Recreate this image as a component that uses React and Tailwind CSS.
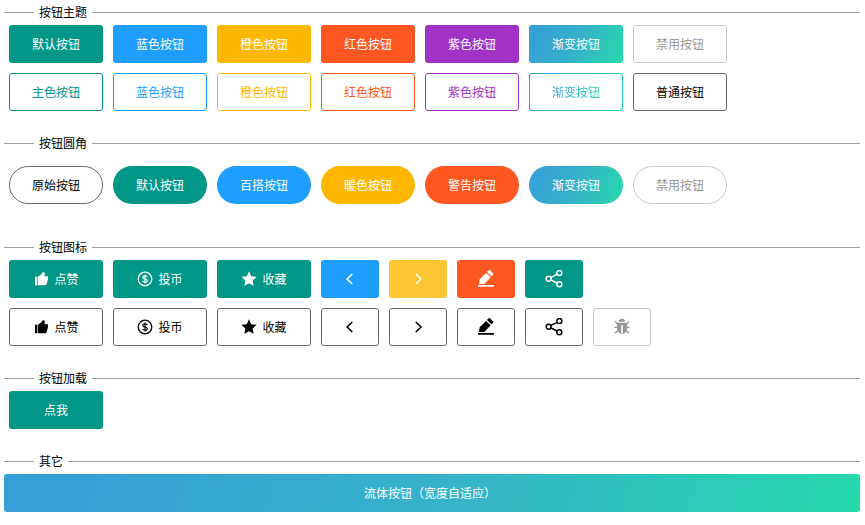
import { RiStarFill } from 'react-icons/ri'

const Thumb = () => (
  <svg viewBox="0 0 48 48" className="size-4 translate-x-px" fill="currentColor">
    <path d="M3 17h6v26H3zM11 18l11-8 4-6h4l3 4-2 8h11v8l-4 15-3 4H11z" />
  </svg>
)
const Coin = () => (
  <svg viewBox="0 0 16 16" className="size-4" fill="none" stroke="currentColor">
    <circle cx="8" cy="8" r="6.8" strokeWidth="1.3" />
    <path d="M10.3 6Q9.8 4.9 8 4.9 5.8 4.9 5.8 6.4 5.8 7.7 8 8 10.3 8.3 10.3 9.7 10.3 11.2 8 11.2 6 11.2 5.6 9.9M8 3.4v9.2" strokeWidth="1.2" />
  </svg>
)
const Star = () => <RiStarFill className="size-4" />
const Left = () => (
  <svg viewBox="0 0 18 18" className="size-[18px]" fill="none" stroke="currentColor" strokeWidth="1.6">
    <path d="M11.3 4L6.1 9l5.2 5" />
  </svg>
)
const Right = () => (
  <svg viewBox="0 0 18 18" className="size-[18px]" fill="none" stroke="currentColor" strokeWidth="1.6">
    <path d="M6.8 4L12 9l-5.2 5" />
  </svg>
)
const Pen = () => (
  <svg viewBox="0 0 54 54" className="size-[18px]" fill="currentColor">
    <path d="M6 42l2-14L27 9l14 13-19 20zM30 6l5-5q2-2 4 0l9 9q2 2 0 4l-5 5zM3 45h48v5H3z" />
  </svg>
)
const Share = () => (
  <svg viewBox="0 0 54 54" className="size-[18px]" fill="none" stroke="currentColor" strokeWidth="4.4">
    <circle cx="11" cy="26" r="7.5" />
    <circle cx="43" cy="9" r="7.5" />
    <circle cx="43" cy="43" r="7.5" />
    <path d="M18 22l18-9M18 30l18 9" />
  </svg>
)
const Bug = () => (
  <svg viewBox="0 0 54 54" className="size-[18px]">
    <path d="M17 11q1-9 10-9t10 9z" fill="currentColor" />
    <path d="M12 14h30v20q-2 12-15 14-13-2-15-14z" fill="currentColor" />
    <path d="M13 18L6 10M41 18l7-8M13 28H4M41 28h9M14 38l-8 8M40 38l8 8" stroke="currentColor" strokeWidth="4" />
    <path d="M24.5 22h5v24h-5z" fill="#fff" />
  </svg>
)

const S = {
  green: 'bg-[#009688] text-white',
  blue: 'bg-[#1e9fff] text-white',
  orange: 'bg-[#ffb800] text-white',
  lightOrange: 'bg-[#ffc633] text-white',
  red: 'bg-[#ff5722] text-white',
  purple: 'bg-[#a233c6] text-white',
  grad: 'bg-[linear-gradient(113deg,#369fd7_5%,#37b1cb_50%,#25daaa_100%)] text-white',
  plain: 'border border-[#6b6b6b] bg-white text-black',
  disabled: 'border border-[#c9c9c9] bg-white text-[#999]',
  oGreen: 'border border-[#009688] text-[#009688]',
  oBlue: 'border border-[#1e9fff] text-[#1e9fff]',
  oOrange: 'border border-[#ffb800] text-[#ffb800]',
  oRed: 'border border-[#ff5722] text-[#ff5722]',
  oPurple: 'border border-[#a233c6] text-[#a233c6]',
}

function Btn({ s, w = 'w-[94px]', round = 'rounded-[3px]', children }) {
  return (
    <button className={`flex h-[38px] shrink-0 items-center justify-center gap-[5px] ${w} ${round} ${S[s]}`}>
      {children}
    </button>
  )
}

function GradientOutline({ children }) {
  return (
    <button className="h-[38px] w-[94px] rounded-[3px] bg-[linear-gradient(113deg,#369fd7_5%,#37b1cb_50%,#25daaa_100%)] p-px">
      <span className="flex h-full items-center justify-center rounded-[2px] bg-white">
        <span className="bg-[linear-gradient(100deg,#369fd7,#25daaa)] bg-clip-text text-transparent">{children}</span>
      </span>
    </button>
  )
}

function Section({ title, line = 'bg-[#a0a0a0]', className, children }) {
  return (
    <section className={className}>
      <h2 className="flex h-[25px] items-center gap-[5px]">
        <span className={`w-[30px] ${line} h-px`} />
        <span className="pb-[2px]">{title}</span>
        <span className={`flex-1 ${line} h-px`} />
      </h2>
      {children}
    </section>
  )
}

const Row = ({ className = '', children }) => <div className={`flex gap-2.5 pl-[5px] ${className}`}>{children}</div>

const pill = 'rounded-full'
const icon = 'w-[58px]'

export default function App() {
  return (
    <main className="h-[525px] overflow-hidden bg-white pr-[5px] pl-1 font-['Microsoft_YaHei','Noto_Sans_CJK_SC',sans-serif] text-[12px] leading-[18px] text-black">
      <Section title="按钮主题" className="h-[131px]">
        <Row>
          <Btn s="green">默认按钮</Btn>
          <Btn s="blue">蓝色按钮</Btn>
          <Btn s="orange">橙色按钮</Btn>
          <Btn s="red">红色按钮</Btn>
          <Btn s="purple">紫色按钮</Btn>
          <Btn s="grad">渐变按钮</Btn>
          <Btn s="disabled">禁用按钮</Btn>
        </Row>
        <Row className="mt-2.5">
          <Btn s="oGreen">主色按钮</Btn>
          <Btn s="oBlue">蓝色按钮</Btn>
          <Btn s="oOrange">橙色按钮</Btn>
          <Btn s="oRed">红色按钮</Btn>
          <Btn s="oPurple">紫色按钮</Btn>
          <GradientOutline>渐变按钮</GradientOutline>
          <Btn s="plain">普通按钮</Btn>
        </Row>
      </Section>
      <Section title="按钮圆角" className="h-[104px]">
        <Row className="mt-2.5">
          <Btn s="plain" round={pill}>原始按钮</Btn>
          <Btn s="green" round={pill}>默认按钮</Btn>
          <Btn s="blue" round={pill}>百搭按钮</Btn>
          <Btn s="orange" round={pill}>暖色按钮</Btn>
          <Btn s="red" round={pill}>警告按钮</Btn>
          <Btn s="grad" round={pill}>渐变按钮</Btn>
          <Btn s="disabled" round={pill}>禁用按钮</Btn>
        </Row>
      </Section>
      <Section title="按钮图标" className="h-[131px]">
        <Row>
          <Btn s="green"><Thumb />点赞</Btn>
          <Btn s="green"><Coin />投币</Btn>
          <Btn s="green"><Star />收藏</Btn>
          <Btn s="blue" w={icon}><Left /></Btn>
          <Btn s="lightOrange" w={icon}><Right /></Btn>
          <Btn s="red" w={icon}><Pen /></Btn>
          <Btn s="green" w={icon}><Share /></Btn>
        </Row>
        <Row className="mt-2.5">
          <Btn s="plain"><Thumb />点赞</Btn>
          <Btn s="plain"><Coin />投币</Btn>
          <Btn s="plain"><Star />收藏</Btn>
          <Btn s="plain" w={icon}><Left /></Btn>
          <Btn s="plain" w={icon}><Right /></Btn>
          <Btn s="plain" w={icon}><Pen /></Btn>
          <Btn s="plain" w={icon}><Share /></Btn>
          <Btn s="disabled" w={icon}><Bug /></Btn>
        </Row>
      </Section>
      <Section title="按钮加载" className="h-[83px]">
        <Row>
          <Btn s="green">点我</Btn>
        </Row>
      </Section>
      <Section title="其它">
        <Btn s="grad" w="w-full pr-1">流体按钮（宽度自适应）</Btn>
      </Section>
    </main>
  )
}
